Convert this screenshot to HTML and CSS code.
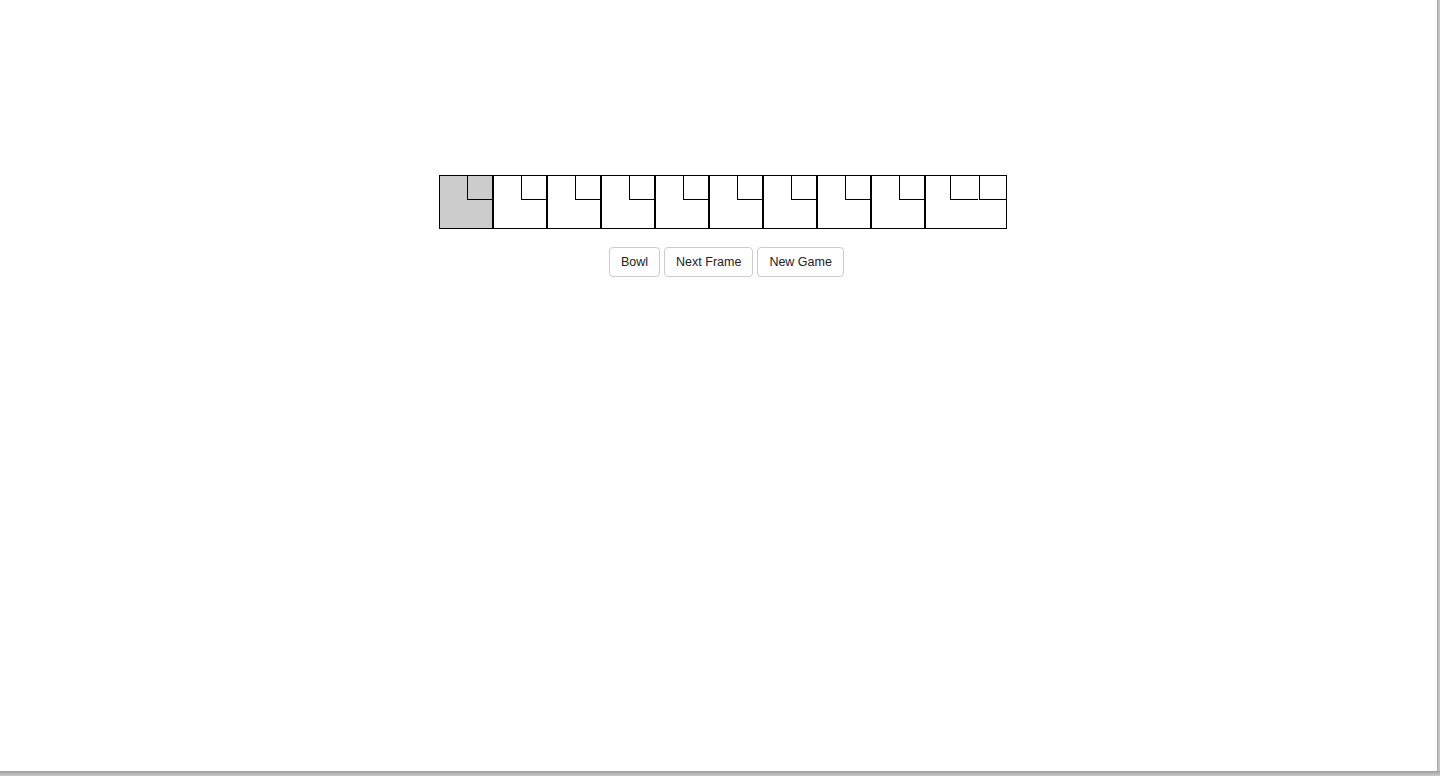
FILE: index.html
```html
<!DOCTYPE html>
<html>
<head>
<meta charset="utf-8">
<title>Bowling</title>
<link rel="stylesheet" href="styles.css">
</head>
<body>
<div class="window">
  <div class="stage">
    <div class="board">
      <div class="frame current"><div class="ball"></div></div>
      <div class="frame"><div class="ball"></div></div>
      <div class="frame"><div class="ball"></div></div>
      <div class="frame"><div class="ball"></div></div>
      <div class="frame"><div class="ball"></div></div>
      <div class="frame"><div class="ball"></div></div>
      <div class="frame"><div class="ball"></div></div>
      <div class="frame"><div class="ball"></div></div>
      <div class="frame"><div class="ball"></div></div>
      <div class="frame last">
        <div class="balls">
          <div class="ball wide"></div>
          <div class="ball"></div>
        </div>
      </div>
    </div>
    <div class="buttons">
      <button class="btn">Bowl</button>
      <button class="btn">Next Frame</button>
      <button class="btn">New Game</button>
    </div>
  </div>
</div>
</body>
</html>
```
FILE: styles.css
```css
html, body {
  margin: 0;
  padding: 0;
}
body {
  width: 1440px;
  height: 776px;
  background: linear-gradient(to bottom, #9b9b9b 0, #9b9b9b 771px, #a8a8a8 772px, #c8c8c8 776px);
  overflow: hidden;
  font-family: "Liberation Sans", Arial, sans-serif;
}
.window {
  width: 1437px;
  height: 771px;
  background: #ffffff;
  border-right: 1px solid #a6a6a6;
  box-shadow: 2px 0 0 #c4c4c4;
}
.stage {
  padding-top: 175px;
  padding-left: 439px;
}
.board {
  display: flex;
}
.frame {
  position: relative;
  width: 54px;
  height: 54px;
  box-sizing: border-box;
  border: 1px solid #000;
  background: #fff;
}
.frame.current {
  background: #cccccc;
}
.frame.last {
  width: 82px;
}
.ball {
  position: absolute;
  top: 0;
  right: 0;
  width: 25px;
  height: 24px;
  box-sizing: border-box;
  border-left: 1px solid #000;
  border-bottom: 1px solid #000;
}
.balls {
  position: absolute;
  top: 0;
  right: 0;
  display: flex;
  gap: 1px;
}
.balls .ball {
  position: static;
  width: 27px;
}
.balls .ball.wide {
  width: 28px;
}
.buttons {
  display: flex;
  gap: 4px;
  margin-top: 18px;
  margin-left: 170px;
}
.btn {
  height: 30px;
  padding: 0 11px 1px;
  font-family: "Liberation Sans", Arial, sans-serif;
  font-size: 12.5px;
  color: #222;
  background: #fff;
  border: 1px solid #ccc;
  border-radius: 4px;
  cursor: pointer;
}
```
